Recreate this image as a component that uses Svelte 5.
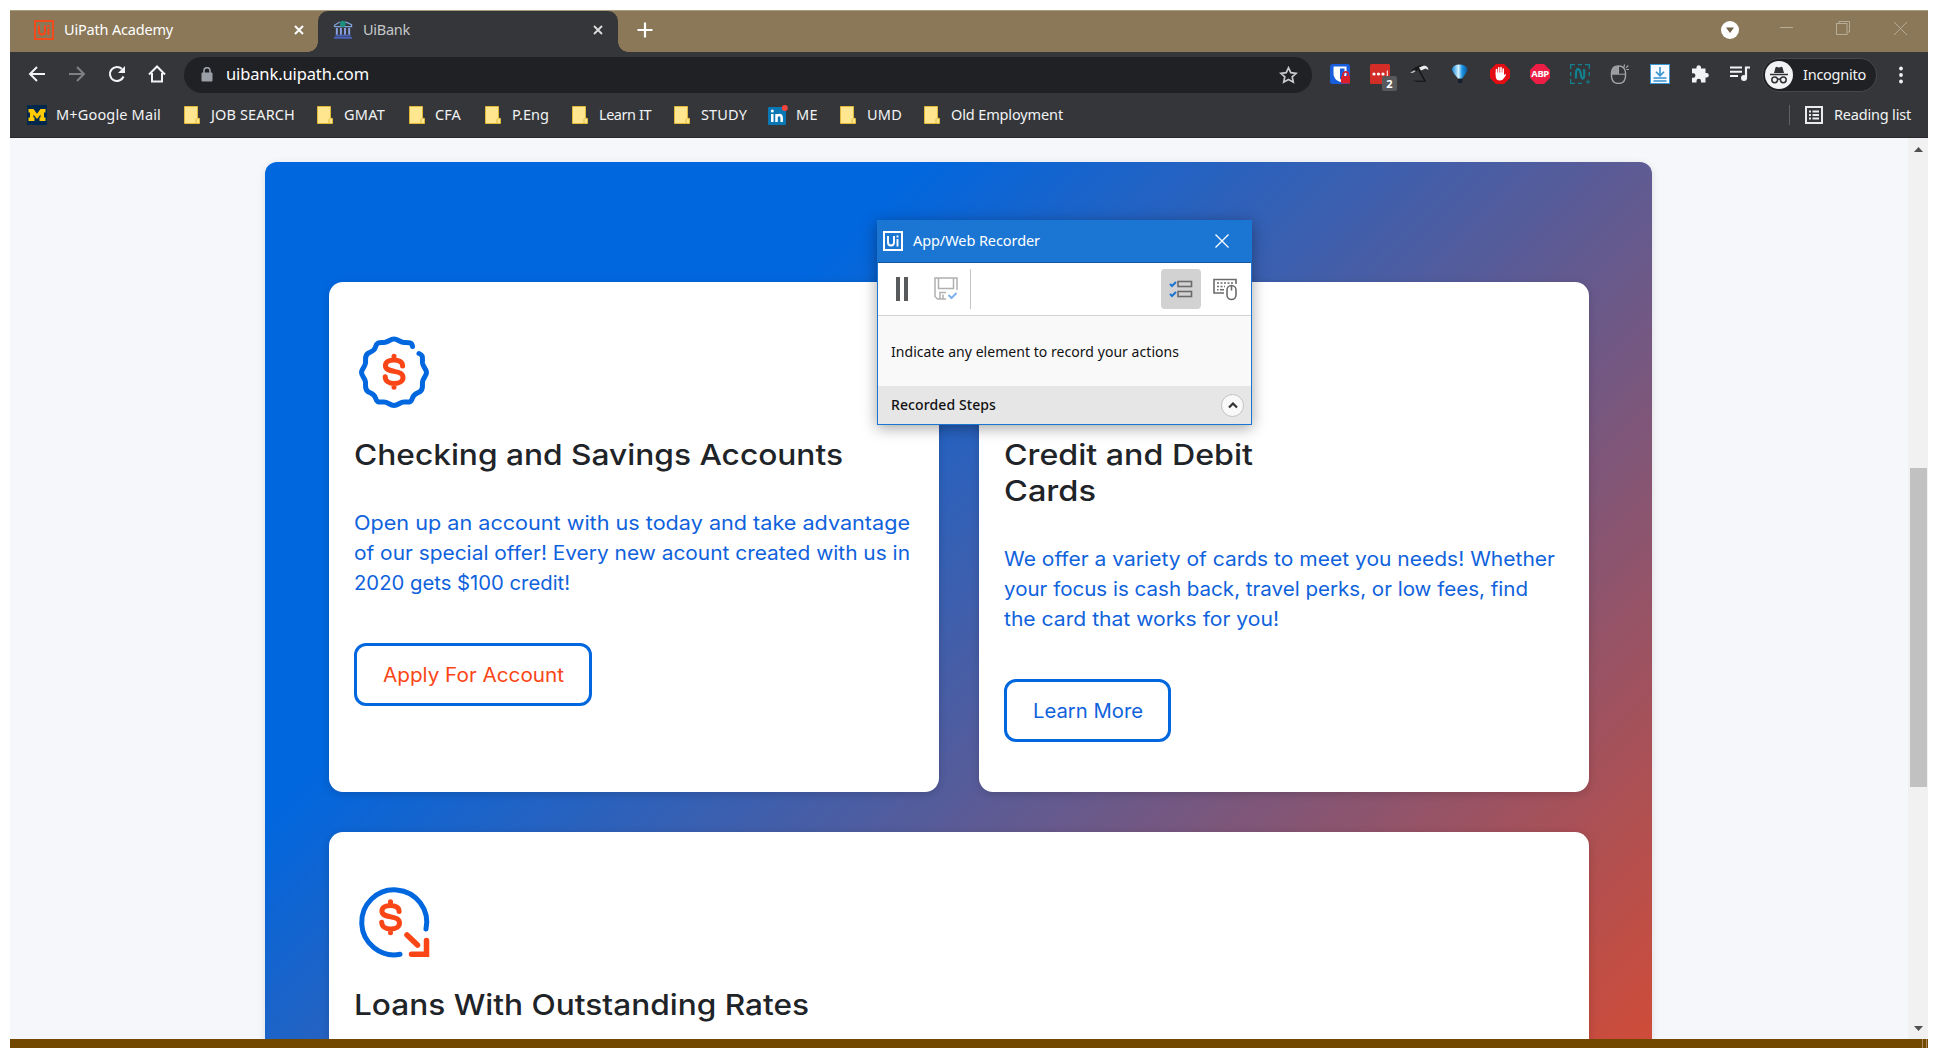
<script>
  // Spreads a line of text over a given measure with letter spacing.
  function measure(node, width) {
    node.style.letterSpacing = '0px';
    const natural = node.getBoundingClientRect().width;
    const count = [...node.textContent].length;
    node.style.letterSpacing = `${(width - natural) / count}px`;
  }

  // Widens the letterforms of a line so that it fills a given measure.
  function widen(node, width) {
    const natural = node.getBoundingClientRect().width;
    node.style.transform = `scaleX(${width / natural})`;
    node.style.marginRight = `${width - natural}px`;
  }

  const bookmarks = [
    { label: 'M+Google Mail', icon: 'michigan', w: 105, slot: 29, gap: 23 },
    { label: 'JOB SEARCH', icon: 'folder', w: 84, slot: 27, gap: 22 },
    { label: 'GMAT', icon: 'folder', w: 41, slot: 27, gap: 24 },
    { label: 'CFA', icon: 'folder', w: 26, slot: 26, gap: 24 },
    { label: 'P.Eng', icon: 'folder', w: 37, slot: 27, gap: 23 },
    { label: 'Learn IT', icon: 'folder', w: 52, slot: 27, gap: 23 },
    { label: 'STUDY', icon: 'folder', w: 46, slot: 27, gap: 21 },
    { label: 'ME', icon: 'linkedin', w: 22, slot: 28, gap: 22 },
    { label: 'UMD', icon: 'folder', w: 35, slot: 27, gap: 22 },
    { label: 'Old Employment', icon: 'folder', w: 112, slot: 27, gap: 0 },
  ];

  const cards = [
    {
      icon: 'badge',
      title: [['Checking and Savings Accounts', 489]],
      text: [
        ['Open up an account with us today and take advantage', 556],
        ['of our special offer! Every new acount created with us in', 556],
        ['2020 gets $100 credit!', 216],
      ],
      action: 'Apply For Account',
      actionWidth: 181,
      accent: true,
    },
    {
      icon: 'card',
      title: [['Credit and Debit', 249], ['Cards', 92]],
      text: [
        ['We offer a variety of cards to meet you needs! Whether', 551],
        ['your focus is cash back, travel perks, or low fees, find', 524],
        ['the card that works for you!', 275],
      ],
      action: 'Learn More',
      actionWidth: 110,
    },
    { icon: 'loan', wide: true, title: [['Loans With Outstanding Rates', 455]], text: [] },
  ];
</script>

{#snippet dollar()}
  <path d="M8.600 -5.500C8.600 -9.700 4.600 -11.600 0 -11.600C-4.800 -11.600 -8.600 -9.400 -8.600 -5.900C-8.600 -1.800 -4.200 -1 0 -0.200C4.800 .8 9 1.600 9 6C9 10 5 12 0.200 12C-4.800 12 -8.800 9.600 -8.800 5.200M0 -11.600V-15.200M0 12V15.800" />
{/snippet}

<div class="screen">
  <div class="window">
    <header class="tabs">
      <div class="tab first">
        <svg class="tabicon" width="20" height="20" viewBox="0 0 20 20" fill="none" stroke="#fa4616">
          <rect x="1" y="1" width="18" height="18" stroke-width="1.8" />
          <path d="M5 5.5V11.5Q5 14.6 8 14.6T11 11.5V5.5M14.4 8.5V15M14.4 5V7" stroke-width="2" />
        </svg>
        <span class="tabtext" use:measure={109}>UiPath Academy</span>
        <svg class="x" width="10" height="10" viewBox="0 0 10 10"><path d="M1 1L9 9M9 1L1 9" stroke="#fff" stroke-width="2" /></svg>
      </div>
      <div class="tab active">
        <svg class="tabicon" width="20" height="20" viewBox="0 0 21 20" fill="none">
          <path d="M1.5 6.5V5L7 1.5M13 1.5L19.5 4.5V6.5H1.5" stroke="#7fa4dc" stroke-width="1.3" />
          <ellipse cx="10.3" cy="3.6" rx="3" ry="3.2" fill="#1c8f7e" />
          <path d="M4 8V15M8.3 8V15M12.6 8V15M17 8V15" stroke="#8ba2e4" stroke-width="2" />
          <path d="M1 18.2H20M2.5 16H18.5" stroke="#4a62b8" stroke-width="1.8" />
        </svg>
        <span class="tabtext dim" use:measure={47}>UiBank</span>
        <svg class="x" width="10" height="10" viewBox="0 0 10 10"><path d="M1 1L9 9M9 1L1 9" stroke="#ddd" stroke-width="1.8" /></svg>
      </div>
      <svg class="plus" width="16" height="16" viewBox="0 0 16 16"><path d="M8 0.5V15.5M0.5 8H15.5" stroke="#fff" stroke-width="2.2" /></svg>
      <div class="controls">
        <svg width="18" height="18" viewBox="0 0 18 18"><circle cx="9" cy="9" r="9" fill="#fff" /><path d="M5 6.5H13L9 12Z" fill="#6f6046" /></svg>
        <svg width="13" height="13" viewBox="0 0 13 13"><path d="M0 5.500H13" stroke="#b7ac96" /></svg>
        <svg width="14" height="14" viewBox="0 0 14 14" fill="none" stroke="#b7ac96"><rect x=".5" y="2.5" width="10.5" height="11" /><path d="M3 2.5V.5H13.500V11H11.5" /></svg>
        <svg width="13" height="13" viewBox="0 0 13 13"><path d="M0 0L13 13M13 0L0 13" stroke="#b7ac96" /></svg>
      </div>
    </header>

    <div class="toolbar">
      <div class="nav">
        <svg width="18" height="16" viewBox="0 0 18 16" fill="none" stroke="#f1f3f4" stroke-width="2"><path d="M17 8H2M9 1L2 8L9 15" /></svg>
        <svg width="18" height="16" viewBox="0 0 18 16" fill="none" stroke="#808185" stroke-width="2"><path d="M1 8H16M9 1L16 8L9 15" /></svg>
        <svg width="18" height="18" viewBox="0 0 18 18"><path d="M15.500 11.5A7 7 0 1 1 14 4.100" fill="none" stroke="#f1f3f4" stroke-width="2.100" /><path d="M17 1V8H10Z" fill="#f1f3f4" /></svg>
        <svg width="18" height="18" viewBox="0 0 18 18" fill="none" stroke="#f1f3f4" stroke-width="2"><path d="M1 9.500L9 1.500L17 9.500M4 8V16.500H14V8" /></svg>
      </div>
      <div class="omnibox">
        <svg width="12" height="15" viewBox="0 0 12 15"><rect x=".5" y="5.500" width="11" height="9" rx="1" fill="#9aa0a6" /><path d="M3 6V3.600a3 3 0 0 1 6 0V6" fill="none" stroke="#9aa0a6" stroke-width="1.600" /></svg>
        <span class="url" use:measure={143}>uibank.uipath.com</span>
        <svg class="star" width="19" height="18" viewBox="0 0 19 18"><path d="M9.500 1.800L11.800 6.700L17.200 7.300L13.200 10.900L14.300 16.200L9.500 13.500L4.700 16.200L5.800 10.900L1.800 7.300L7.200 6.700Z" fill="none" stroke="#c8cacd" stroke-width="1.700" /></svg>
      </div>
      <div class="extensions">
        <svg viewBox="0 0 20 20"><rect width="20" height="20" rx="2.500" fill="#175ddc" /><path d="M3.500 2.500H16.500V10Q16.500 15 10 18Q3.500 15 3.500 10Z" fill="#fff" /><path d="M10 4.500H14.500V10Q14.500 13.500 10 15.500Z" fill="#175ddc" /><rect x="11" y="12" width="9.500" height="7.500" rx="1" fill="#d81f2a" /><path d="M13 12V10.500a2.700 2.700 0 0 1 5.400 0V12" fill="none" stroke="#d81f2a" stroke-width="1.700" /></svg>
        <div class="pass">
          <svg viewBox="0 0 20 20"><rect width="20" height="20" rx="1.500" fill="#d32d27" /><circle cx="4" cy="10" r="1.600" fill="#fff" /><circle cx="8.500" cy="10" r="1.600" fill="#fff" /><circle cx="13" cy="10" r="1.600" fill="#fff" /><path d="M17.300 6.500V13" stroke="#fff" stroke-width="1" /></svg>
          <span class="count">2</span>
        </div>
        <svg viewBox="0 0 20 20"><path d="M0 8.500Q4 1.500 13 1.200Q18 2 18.500 6L15 4L11 5.500L9 5L4 9L1 7.500Z" fill="#17181a" /><path d="M9 3.500L14 1.600Q18 2 18.500 6L15.500 4.500L11 6.500Z" fill="#ededed" /><path d="M0 8.700L4 6.300L6 7L3 9Z" fill="#bbb" /><path d="M9 6L15 17" stroke="#111" stroke-width="1.400" /><path d="M3 16.500H14L17 18H7Z" fill="#1b1c1e" /></svg>
        <svg viewBox="0 0 20 20"><defs><linearGradient id="balloon"><stop offset="0" stop-color="#1787d6" /><stop offset=".42" stop-color="#d4f2ff" /><stop offset=".65" stop-color="#1b94e4" /><stop offset="1" stop-color="#07579c" /></linearGradient></defs><path d="M2 5Q3 .5 9.500 .5T17.500 5Q17.500 8 12 14.500H8Q2 8 2 5Z" fill="url(#balloon)" /><rect x="8" y="15" width="4.500" height="4" fill="#15202c" /></svg>
        <svg viewBox="0 0 20 20"><path d="M6 0H14L20 6V14L14 20H6L0 14V6Z" fill="#e40d13" /><path d="M6.500 10V5.500M8.700 9V3.800M11 9V3.600M13.200 10V5" stroke="#fff" stroke-width="1.600" stroke-linecap="round" /><path d="M5.700 8.500H14V11L15.800 9.800Q16.500 11 14 14Q12.500 16.500 10 16.500Q5.700 16.500 5.700 12Z" fill="#fff" /></svg>
        <div class="abp"><svg viewBox="0 0 20 20"><path d="M6 0H14L20 6V14L14 20H6L0 14V6Z" fill="#ed1e45" /></svg><span>ABP</span></div>
        <svg viewBox="0 0 20 20" fill="none" stroke="#13808f"><path d="M.7 5V.7H5M8 .7H12M15 .7H19.300V5M.7 8V12M.7 15V19.300H5M8 19.300H12M19.300 8V12" stroke-width="1.300" /><path d="M6 14.500Q5.500 4.500 8.300 5Q10 5.500 10.800 10Q11.500 14.800 13 14.500Q14.800 14 14 5" stroke-width="2.300" /><path d="M18 15.500V20M15.800 17.800H20" stroke-width="1" /></svg>
        <svg viewBox="0 0 20 20"><path d="M1.500 8.500Q2 2 8.500 2T15.500 8.500V12.500Q15 19.500 8.500 19.500T1.500 12.500Z" fill="none" stroke="#a5a6a8" stroke-width="1.400" /><path d="M1.500 10V8.500Q2 2 8 2V10Z" fill="#9b9c9e" /><path d="M1.500 10.200H15.500M8.500 2V10" stroke="#a5a6a8" /><path d="M14 3L14.600 .5M16 3.800L18.300 1.500M16.500 5.500L19 5.500" stroke="#a5a6a8" stroke-width="1.200" /></svg>
        <svg viewBox="0 0 20 20"><rect width="20" height="20" fill="#3d97d3" /><rect x="1" y="1" width="18" height="18" fill="#f7fbfe" /><path d="M10 3V11M6 7.800L10 11.800L14 7.800M3.500 14H16.500M3.500 17H16.500" fill="none" stroke="#3492d0" stroke-width="1.600" /></svg>
        <svg viewBox="0 0 20 20"><path d="M2 4.500H6.500V3A2.300 2.300 0 0 1 11 3V4.500H15.500V9H17A2.300 2.300 0 0 1 17 13.500H15.500V18.500H11V17A2.200 2.200 0 0 0 6.500 17V18.500H2V13.700H3.200A2.200 2.200 0 0 0 3.200 9.200H2Z" fill="#f1f3f4" /></svg>
        <svg viewBox="0 0 20 20"><path d="M0 3.500H12M0 7.800H12M0 12H8" stroke="#f1f3f4" stroke-width="2" /><path d="M16 14V3.500H20" fill="none" stroke="#f1f3f4" stroke-width="2.200" /><circle cx="14" cy="14" r="3" fill="#f1f3f4" /></svg>
      </div>
      <div class="incognito">
        <svg width="28" height="28" viewBox="0 0 28 28"><circle cx="14" cy="14" r="14" fill="#f1f3f4" /><path d="M9 12L10.500 6.500Q11 5.500 12 6L14 6.500L16 6Q17 5.500 17.500 6.500L19 12Z" fill="#303134" /><path d="M5 13.500H23" stroke="#303134" stroke-width="1.500" /><g fill="none" stroke="#303134" stroke-width="1.500"><circle cx="9.700" cy="18.800" r="2.900" /><circle cx="18.300" cy="18.800" r="2.900" /><path d="M12.600 18.300Q14 17.500 15.400 18.300" /></g></svg>
        <span use:measure={63}>Incognito</span>
      </div>
      <svg class="dots" width="4" height="18" viewBox="0 0 4 18" fill="#f1f3f4"><circle cx="2" cy="2.500" r="1.900" /><circle cx="2" cy="9" r="1.900" /><circle cx="2" cy="15.500" r="1.900" /></svg>
    </div>

    <nav class="bookmarks">
      {#each bookmarks as b}
        <div class="bookmark" style:margin-right="{b.gap}px">
          <span class="slot" style:width="{b.slot}px">
            {#if b.icon === 'folder'}
              <svg width="16" height="18" viewBox="0 0 16 18"><path d="M.5 .5H13.500V12L15.500 12.500V17.500H.5Z" fill="#ffe68f" stroke="#e0b93a" /><path d="M12 17.500V13.500L13.500 12" fill="none" stroke="#e0b93a" /></svg>
            {:else if b.icon === 'michigan'}
              <svg width="20" height="20" viewBox="0 0 20 20"><rect width="20" height="20" fill="#00274c" /><path d="M1.500 4H6.500L10 8.800L13.500 4H18.500V7.500H17V12.500H18.500V16H12.500V12.500H13.500V9.500L10 14L6.500 9.500V12.500H7.500V16H1.500V12.500H3V7.500H1.500Z" fill="#ffcb05" /></svg>
            {:else}
              <svg width="20" height="20" viewBox="0 0 20 20"><rect y="2" width="18" height="18" rx="1" fill="#0a77b5" /><path d="M4.300 9V17M8.500 9V17M8.500 12.500Q9 10 11.300 10Q13.700 10 13.700 13V17" fill="none" stroke="#fff" stroke-width="2.500" /><circle cx="4.300" cy="6" r="1.500" fill="#fff" /><circle cx="16.800" cy="3" r="3" fill="#f0443e" /></svg>
            {/if}
          </span>
          <span class="label" use:measure={b.w}>{b.label}</span>
        </div>
      {/each}
      <div class="reading">
        <svg width="18" height="18" viewBox="0 0 18 18" fill="none" stroke="#e8eaed"><rect x="1" y="1" width="16" height="16" stroke-width="2" /><path d="M4 5.500H6M4 9H6M4 12.500H6M7.500 5.500H14M7.500 9H14M7.500 12.500H14" stroke-width="1.800" /></svg>
        <span class="label" use:measure={77}>Reading list</span>
      </div>
    </nav>

    <div class="viewport">
      <main>
        <section class="panel">
          {#each cards as card}
            <article class="card" class:wide={card.wide}>
              <svg class="art" width="80" height="80" viewBox="0 0 80 80" fill="none" stroke-width="5" stroke-linecap="round" stroke-linejoin="round">
                {#if card.icon === 'badge'}
                  <path stroke="#0067df" d="M58.500 14.500C58 10 54 10.500 50 10.500C46 10.500 44 7 40 7C36 7 34 10.500 30 10.500C25 10.500 23 10 21.500 15C20.500 19 17.500 19.500 14.500 21C10 23.500 12 27 11.500 31C11 35 7.500 37 7.500 40.500C7.500 44 11 46 11.500 50C12 54 10 57.500 14.500 60C17.500 61.500 20.500 62 21.500 66C23 71 25 70 30 70C34 70 36 73.500 40 73.500C44 73.500 46 70 50 70C55 70 57 71 58.500 66C59.500 62 62.500 61.500 65.500 60C70 57.500 68 54 68.500 50C69 46 72.500 44 72.500 40.500C72.500 37 69 35 68.500 31C68 26 70 23.500 65 21.500" />
                  <g transform="translate(40 39.500)" stroke="#fa4616">{@render dollar()}</g>
                {:else if card.icon === 'loan'}
                  <path stroke="#0067df" d="M72 47A32.500 32.500 0 1 0 46 72.300" />
                  <g transform="translate(36.500 35)" stroke="#fa4616">{@render dollar()}</g>
                  <path stroke="#fa4616" stroke-width="5.500" stroke-linejoin="miter" d="M53 53L63.500 63M72.500 58.500V72.300H57.500" />
                {:else}
                  <rect x="8" y="18" width="64" height="46" rx="5" stroke="#0067df" />
                  <path stroke="#fa4616" d="M8 32H72" />
                {/if}
              </svg>
              <h2>
                {#each card.title as [line, w]}<span class="line"><span class="wide-text" use:widen={w}>{line}</span></span>{/each}
              </h2>
              <p>
                {#each card.text as [line, w]}<span class="line"><span class="wide-text" use:widen={w}>{line}</span></span>{/each}
              </p>
              {#if card.action}
                <button class:accent={card.accent}><span class="wide-text" use:widen={card.actionWidth}>{card.action}</span></button>
              {/if}
            </article>
          {/each}
        </section>
      </main>
      <div class="scrollbar">
        <svg width="9" height="5" viewBox="0 0 9 5"><path d="M0 5L4.500 0L9 5Z" fill="#505050" /></svg>
        <div class="thumb"></div>
        <svg class="down" width="9" height="5" viewBox="0 0 9 5"><path d="M0 0H9L4.500 5Z" fill="#505050" /></svg>
      </div>
    </div>
  </div>
  <footer class="taskbar"><span use:measure={57}>3:21 AM</span><i></i></footer>

  <aside class="recorder">
    <div class="rtitle">
      <svg width="20" height="20" viewBox="0 0 20 20" fill="none" stroke="#fff"><rect x="1" y="1" width="18" height="18" stroke-width="2" /><path d="M5 5V11.500Q5 14.500 8 14.500T11 11.500V5M14.500 8V15.500M14.500 4.500V6.500" stroke-width="1.900" /></svg>
      <span class="label" use:measure={127}>App/Web Recorder</span>
      <svg class="rclose" width="14" height="14" viewBox="0 0 14 14"><path d="M.5 .5L13.500 13.500M13.500 .5L.5 13.500" stroke="#fff" stroke-width="1.300" /></svg>
    </div>
    <div class="rtools">
      <svg width="12" height="24" viewBox="0 0 12 24" fill="#58595b"><rect width="4" height="24" /><rect x="8" width="4" height="24" /></svg>
      <svg class="save" width="24" height="24" viewBox="0 0 24 24" fill="none" stroke="#b0b0b0" stroke-width="1.500"><path d="M12 22H3.500L1 19.500V1H23V13M4.500 1V11.500H19.500V1M6 22V15.500H12M9 17.500V22" /><path d="M14.500 18L17.500 21L22.500 16" stroke="#7fb2ee" stroke-width="2" /></svg>
      <span class="rule"></span>
      <span class="selected">
        <svg width="24" height="18" viewBox="0 0 24 18" fill="none"><path d="M1 4L3 6L7 2M1 14L3 16L7 12" stroke="#1b76d3" stroke-width="2" /><rect x="9" y="1.500" width="13.500" height="5" stroke="#6b6b6b" stroke-width="1.600" /><rect x="9" y="11.500" width="13.500" height="5" stroke="#6b6b6b" stroke-width="1.600" /></svg>
      </span>
      <svg class="keys" width="24" height="24" viewBox="0 0 24 24" fill="none" stroke="#6b6b6b" stroke-width="1.600"><path d="M11 16H1V2.500H23V7" /><path d="M4 6H20M4 9.500H12" stroke-dasharray="2 1.500" /><path d="M4 12.800H5.500M7 12.800H11" /><rect x="14" y="8.500" width="9" height="14" rx="4.500" /><path d="M18.500 9V13.500" /></svg>
    </div>
    <div class="rbody"><span use:measure={288}>Indicate any element to record your actions</span></div>
    <div class="rsteps">
      <span use:measure={105}>Recorded Steps</span>
      <i><svg width="10" height="7" viewBox="0 0 10 7"><path d="M1 5.500L5 1.500L9 5.500" fill="none" stroke="#333" stroke-width="2.200" /></svg></i>
    </div>
  </aside>
</div>

<style>
  :global(body) { margin: 0; background: #fff; }
  .screen { position: relative; box-sizing: border-box; width: 1938px; height: 1048px; padding: 10px 10px 0; overflow: hidden; background: #fff; font: 14.5px/20px "Noto Sans", sans-serif; }
  .screen span { white-space: nowrap; }
  svg { display: block; flex: none; }
  .label { padding-bottom: 2px; }
  .window { width: 1918px; height: 1029px; display: flex; flex-direction: column; }

  .tabs { height: 42px; flex: none; box-sizing: border-box; border-top: 1px solid #a89c80; background: #8a7859; display: flex; align-items: center; }
  .tab { height: 41px; display: flex; align-items: center; box-sizing: border-box; color: #fff; }
  .first { width: 308px; padding: 0 14px 3px 24px; }
  .active { position: relative; width: 300px; padding: 0 15px 3px 15px; background: #35363a; border-radius: 10px 10px 0 0; }
  .active::before, .active::after { content: ""; position: absolute; bottom: 0; width: 10px; height: 10px; }
  .active::before { right: 100%; background: radial-gradient(circle at 0 0, #8a7859 9.500px, #35363a 10px); }
  .active::after { left: 100%; background: radial-gradient(circle at 100% 0, #8a7859 9.500px, #35363a 10px); }
  .tabicon { margin-right: 10px; }
  .tabtext { padding-bottom: 2px; }
  .dim { color: #c6c8cb; }
  .x { margin-left: auto; }
  .plus { margin: 0 0 3px 19px; }
  .controls { margin: 0 21px 7px auto; display: flex; align-items: center; gap: 44px; }
  .controls svg:first-child { margin: 4px -3px 0 0; }
  .controls svg:nth-child(2) { margin-right: -1px; }

  .toolbar { height: 45px; flex: none; background: #35363a; display: flex; align-items: center; }
  .nav { width: 174px; box-sizing: border-box; padding: 0 0 1px 18px; display: flex; align-items: center; gap: 22px; }
  .omnibox { width: 1128px; height: 36px; box-sizing: border-box; padding: 0 14px 0 17px; border-radius: 18px; background: #202124; display: flex; align-items: center; color: #fff; font-size: 16.500px; }
  .url { margin-left: 13px; padding-bottom: 1px; }
  .star { margin-left: auto; }
  .extensions { margin-left: 18px; display: flex; gap: 20px; padding-bottom: 1px; }
  .extensions svg { width: 20px; height: 20px; }
  .pass, .abp { position: relative; width: 20px; height: 20px; }
  .count { position: absolute; left: 12px; top: 12px; width: 15px; height: 15px; border-radius: 2px; background: #58595b; color: #fff; font: bold 11px/15px "Noto Sans", sans-serif; text-align: center; }
  .abp span { position: absolute; inset: 0; color: #fff; font: bold 9.500px/20px "Noto Sans", sans-serif; text-align: center; letter-spacing: -.4px; }
  .incognito { width: 115px; height: 34px; box-sizing: border-box; margin-left: 12px; padding-left: 2px; border: 1px solid #46474b; border-radius: 17px; background: #202124; display: flex; align-items: center; gap: 10px; color: #f1f3f4; }
  .incognito span { padding-bottom: 2px; }
  .dots { margin-left: 22px; }

  .bookmarks { height: 41px; flex: none; box-sizing: border-box; padding: 0 17px 4px; border-bottom: 1px solid #27282b; background: #35363a; display: flex; align-items: center; color: #f1f3f4; }
  .bookmark { display: flex; align-items: center; }
  .slot { flex: none; }
  .reading { margin-left: auto; height: 20px; padding-left: 15px; border-left: 1px solid #5f6064; display: flex; align-items: center; gap: 11px; }

  .viewport { flex: 1; min-height: 0; display: flex; background: #f5f7fb; }
  main { flex: 1; overflow: hidden; padding: 24px 0 0 255px; }
  .panel { width: 1387px; height: 1215px; box-sizing: border-box; padding: 120px 63px 0 64px; border-radius: 12px; background: linear-gradient(135deg, #0067df 25%, #fa4616); box-shadow: 0 2px 8px #0000001c; display: grid; grid-template-columns: 610px 610px; grid-auto-rows: 510px; gap: 40px; }
  .card { box-sizing: border-box; padding: 50px 25px; border-radius: 14px; background: #fff; box-shadow: 0 2px 8px #00000028; }
  .wide { grid-column: 1 / 3; }
  .line { display: block; }
  .wide-text { display: inline-block; transform-origin: 0 50%; }
  h2 { margin: 25px 0 35px; color: #1f2429; font: 500 29px/36px Inter, sans-serif; }
  p { margin: 0 0 45px; color: #0f62dc; font: 400 19.500px/30px Inter, sans-serif; }
  button { height: 63px; padding: 0 25.500px; border: 3px solid #0067df; border-radius: 12px; background: #fff; color: #0f62dc; font: 400 19.500px/30px Inter, sans-serif; }
  .accent { color: #fa4616; }

  .scrollbar { width: 20px; box-sizing: border-box; padding: 9px 0 8px; background: #f1f1f1; display: flex; flex-direction: column; align-items: center; }
  .thumb { width: 17px; height: 319px; margin-top: 316px; background: #c1c1c1; }
  .down { margin-top: auto; }
  .taskbar { width: 1918px; height: 9px; overflow: hidden; background: #724800; color: #fff; display: flex; }
  .taskbar span { margin: 3px 0 0 1784px; }
  .taskbar i { width: 3px; margin-left: auto; border: solid #a98a58; border-width: 0 1px; margin-right: 1px; }

  .recorder { position: absolute; left: 877px; top: 220px; width: 375px; height: 205px; box-sizing: border-box; border: 1px solid #1b76d3; background: #f9f9f9; box-shadow: 0 3px 14px #0000005c; color: #111; }
  .rtitle { height: 42px; box-sizing: border-box; padding: 0 22px 2px 5px; border-bottom: 1px solid #14559a; background: #1b76d3; display: flex; align-items: center; gap: 10px; color: #fff; }
  .rclose { margin-left: auto; }
  .rtools { height: 53px; box-sizing: border-box; padding: 0 14px 0 18px; border-bottom: 1px solid #d2d2d2; background: #fff; display: flex; align-items: center; }
  .save { margin-left: 26px; }
  .rule { width: 1px; height: 40px; margin-left: 12px; background: #c4c4c4; }
  .selected { width: 40px; height: 40px; margin-left: auto; border-radius: 4px; background: #d2d2d2; display: grid; place-items: center; }
  .keys { margin-left: 12px; }
  .rbody { height: 72px; margin-bottom: -2px; padding-left: 13px; display: flex; align-items: center; font-size: 14px; }
  .rsteps { height: 38px; padding: 0 7px 0 13px; background: #e6e6e6; display: flex; align-items: center; justify-content: space-between; font-weight: 500; font-size: 14px; }
  .rsteps i { width: 21px; height: 21px; border: 1px solid #c2c2c2; border-radius: 50%; background: #f9f9f9; display: grid; place-items: center; }
</style>
